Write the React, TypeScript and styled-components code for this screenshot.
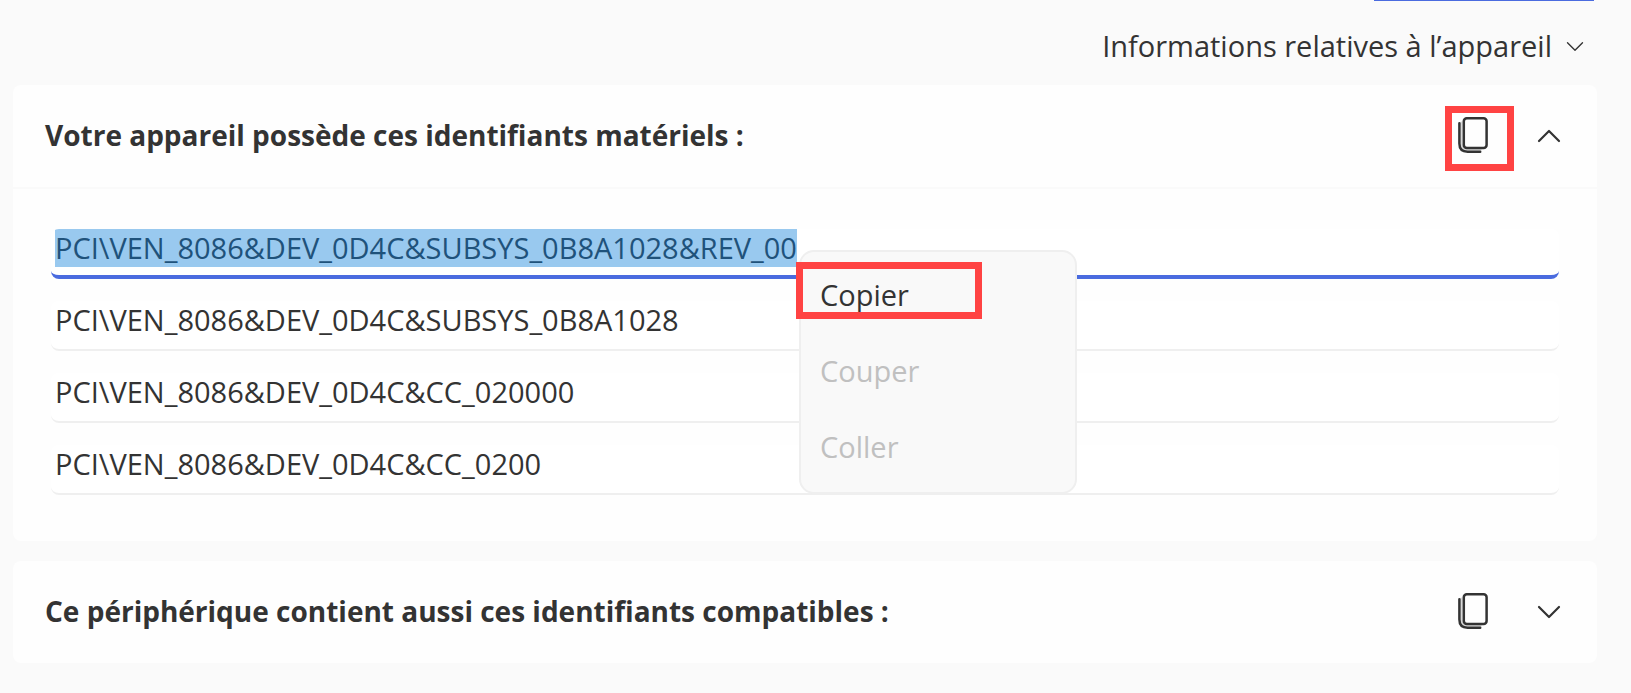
import React, { useEffect, useRef } from "react";
import styled, { createGlobalStyle } from "styled-components";

const GlobalStyle = createGlobalStyle`
  *, *::before, *::after { box-sizing: border-box; }
  body {
    margin: 0;
    background: #fafafa;
    color: #333;
    font-family: "Segoe UI", "Open Sans", "Noto Sans", sans-serif;
    font-size: 29px;
    line-height: 36px;
  }
  button, input { font: inherit; color: inherit; }
`;

const Page = styled.main`
  display: flex;
  flex-direction: column;
  padding: 0 34px 30px 13px;
`;

const ActiveTabBar = styled.div`
  align-self: flex-end;
  width: 220px;
  height: 1px;
  margin-right: 3px;
  background: #4a6bdf;
`;

const InfoButton = styled.button`
  display: flex;
  align-items: center;
  align-self: flex-end;
  gap: 14px;
  height: 84px;
  padding: 8px 13px 2px 0;
  border: 0;
  background: none;
`;

const Cards = styled.div`
  display: flex;
  flex-direction: column;
  gap: 20px;
`;

const Card = styled.section`
  border-radius: 8px;
  background: #fefefe;
`;

const CardHeader = styled.header`
  display: flex;
  align-items: center;
  height: 102px;
  padding: 0 32px 2px;
`;

const CardTitle = styled.h2`
  flex: 1;
  margin: 0;
  font-size: 28px;
  font-weight: 700;
`;

const Actions = styled.div`
  display: flex;
  align-items: center;
  gap: 41px;
`;

const IconButton = styled.button`
  position: relative;
  display: flex;
  align-items: center;
  justify-content: center;
  padding: 0 4px;
  border: 0;
  background: none;
`;

const Highlight = styled.span<{ $inset: string }>`
  position: absolute;
  inset: ${(p) => p.$inset};
  border: 7px solid #ff4343;
  pointer-events: none;
`;

const CardBody = styled.div`
  position: relative;
  display: flex;
  flex-direction: column;
  gap: 22px;
  padding: 40px 38px 46px;
  border-top: 2px solid #fafafa;
`;

const IdField = styled.input`
  width: 100%;
  height: 50px;
  padding: 0 4px 12px;
  border: 0;
  border-bottom: 2px solid #efefef;
  border-radius: 8px;
  background: #fff;
  outline: none;

  &:focus {
    padding-bottom: 10px;
    border-bottom: 4px solid #4a6bdf;
  }
  &::selection {
    background: rgba(153, 201, 239, 0.996);
    color: #1f527b;
  }
`;

const Menu = styled.div`
  position: absolute;
  top: 61px;
  left: 786px;
  display: flex;
  flex-direction: column;
  width: 278px;
  padding: 5px 0 7px;
  border: 2px solid #efefef;
  border-radius: 15px;
  background: #f9f9f9;
`;

const MenuItem = styled.button`
  position: relative;
  height: 76px;
  padding: 0 19px;
  border: 0;
  background: none;
  text-align: left;

  &:disabled { color: #c0c0c0; }
`;

function CopyIcon() {
  return (
    <svg width="30" height="36" viewBox="0 0 30 36" fill="none" stroke="#333" strokeWidth="2.5" strokeLinecap="round" aria-hidden="true">
      <path d="M3.4 5.5v21q0 6.2 6.2 6.2h13" stroke="#d8d8d8" strokeWidth="2" />
      <rect x="5.8" y="1.3" width="22.8" height="29.6" rx="3" />
      <path d="M1.4 6.3v20.2q0 8.2 8.2 8.2h12.6" />
    </svg>
  );
}

function Chevron({ up = false, small = false }: { up?: boolean; small?: boolean }) {
  return (
    <svg width={small ? 18 : 24} height={small ? 11 : 16} viewBox={small ? "0 0 24 14" : "0 -2 24 16"} fill="none" stroke="#333" strokeWidth={small ? 1.8 : 2.2} strokeLinecap="round" strokeLinejoin="round" aria-hidden="true">
      <path d={up ? "M2 12 12 2l10 10" : "M2 2l10 10L22 2"} />
    </svg>
  );
}

const hardwareIds = [
  "PCI\\VEN_8086&DEV_0D4C&SUBSYS_0B8A1028&REV_00",
  "PCI\\VEN_8086&DEV_0D4C&SUBSYS_0B8A1028",
  "PCI\\VEN_8086&DEV_0D4C&CC_020000",
  "PCI\\VEN_8086&DEV_0D4C&CC_0200",
];

function Header({ title, open = false }: { title: string; open?: boolean }) {
  return (
    <CardHeader>
      <CardTitle>{title}</CardTitle>
      <Actions>
        <IconButton aria-label="Copier les identifiants">
          <CopyIcon />
          {open && <Highlight $inset="-11px -22px -18px -9px" />}
        </IconButton>
        <IconButton aria-label={open ? "Réduire" : "Développer"} aria-expanded={open}>
          <Chevron up={open} />
        </IconButton>
      </Actions>
    </CardHeader>
  );
}

export default function App() {
  const first = useRef<HTMLInputElement>(null);

  useEffect(() => {
    first.current?.focus();
    first.current?.select();
  }, []);

  return (
    <>
      <GlobalStyle />
      <Page>
        <ActiveTabBar />
        <InfoButton>
          Informations relatives à l’appareil
          <Chevron small />
        </InfoButton>
        <Cards>
          <Card>
            <Header title="Votre appareil possède ces identifiants matériels :" open />
            <CardBody>
              {hardwareIds.map((id, i) => (
                <IdField key={id} ref={i === 0 ? first : undefined} readOnly value={id} aria-label={`Identifiant matériel ${i + 1}`} />
              ))}
              <Menu role="menu">
                <MenuItem role="menuitem">
                  Copier
                  <Highlight $inset="5px 93px 14px -5px" />
                </MenuItem>
                <MenuItem role="menuitem" disabled>Couper</MenuItem>
                <MenuItem role="menuitem" disabled>Coller</MenuItem>
              </Menu>
            </CardBody>
          </Card>
          <Card>
            <Header title="Ce périphérique contient aussi ces identifiants compatibles :" />
          </Card>
        </Cards>
      </Page>
    </>
  );
}
